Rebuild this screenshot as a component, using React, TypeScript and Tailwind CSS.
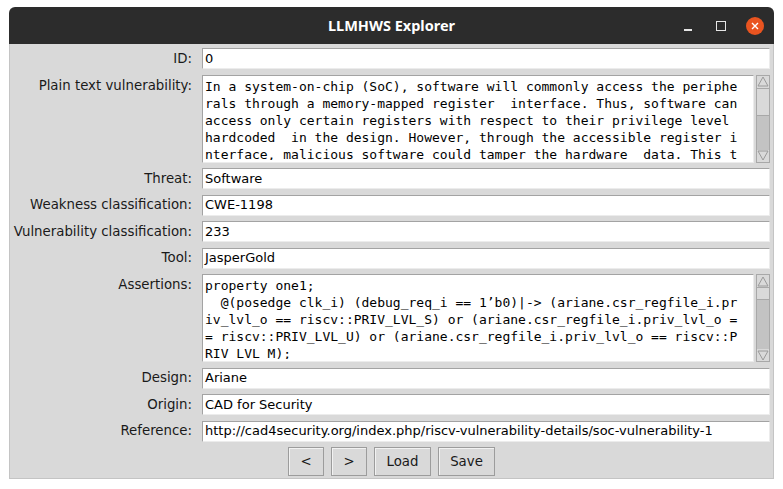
import React from 'react'

const plainLines = [
  'In a system-on-chip (SoC), software will commonly access the periphe',
  'rals through a memory-mapped register  interface. Thus, software can',
  'access only certain registers with respect to their privilege level ',
  'hardcoded  in the design. However, through the accessible register i',
  'nterface, malicious software could tamper the hardware  data. This t',
]

const assertionLines = [
  'property one1;',
  '  @(posedge clk_i) (debug_req_i == 1’b0)|-> (ariane.csr_regfile_i.pr',
  'iv_lvl_o == riscv::PRIV_LVL_S) or (ariane.csr_regfile_i.priv_lvl_o =',
  '= riscv::PRIV_LVL_U) or (ariane.csr_regfile_i.priv_lvl_o == riscv::P',
  'RIV_LVL_M);',
]

function Arrow({ up }: { up: boolean }) {
  return (
    <div className="h-[12px] bg-[#d9d9d9] flex items-center justify-center">
      <svg width="12" height="11" viewBox="0 0 12 11">
        {up ? (
          <polygon points="6,1 11,10 1,10" fill="#d9d9d9" stroke="#9a9a9a" strokeWidth="1" />
        ) : (
          <polygon points="1,1 11,1 6,10" fill="#d9d9d9" stroke="#9a9a9a" strokeWidth="1" />
        )}
      </svg>
    </div>
  )
}

function Scrollbar({ slider }: { slider: number }) {
  return (
    <div className="w-[14px] shrink-0 flex flex-col border border-[#a8a8a8] bg-[#c3c3c3]">
      <Arrow up />
      <div className="bg-[#d9d9d9] border-y border-[#a8a8a8]" style={{ height: slider }} />
      <div className="flex-1" />
      <Arrow up={false} />
    </div>
  )
}

function Entry({ value }: { value: string }) {
  return (
    <div className="h-[21px] bg-white border border-[#a3a3a3] border-r-[#ececec] border-b-[#ececec] px-[2px] flex items-center text-[13px] text-black whitespace-nowrap overflow-hidden">
      {value}
    </div>
  )
}

function TextBox({ lines, slider }: { lines: string[]; slider: number }) {
  return (
    <div className="h-[88px] flex gap-[2px]">
      <div className="flex-1 bg-white border border-[#a3a3a3] border-r-[#ececec] border-b-[#ececec] pl-[2px] pt-[2px] overflow-hidden">
        <div className="h-[82px] overflow-hidden font-['DejaVu_Sans_Mono',monospace] text-[13px] leading-[17px] text-black">
          {lines.map((l, i) => (
            <div key={i} className="whitespace-pre">{l}</div>
          ))}
        </div>
      </div>
      <Scrollbar slider={slider} />
    </div>
  )
}

function Label({ text, top }: { text: string; top?: boolean }) {
  return (
    <div className={`text-right text-[13.33px] text-[#1a1a1a] whitespace-nowrap ${top ? 'pt-[2px] leading-[17px]' : 'h-[21px] flex items-center justify-end'}`}>
      {text}
    </div>
  )
}

function Button({ text, w }: { text: string; w: string }) {
  return (
    <button className={`${w} h-[29px] bg-[#d9d9d9] border border-[#9c9c9c] shadow-[inset_1px_1px_0_#f2f2f2] text-[13.33px] text-[#1a1a1a] flex items-center justify-center`}>
      {text}
    </button>
  )
}

export default function App() {
  return (
    <div className="w-[783px] h-[489px] bg-white pt-[7px] px-[9px] font-['DejaVu_Sans',sans-serif]">
      <div className="w-[765px] flex flex-col">
        <div className="h-[37px] bg-[#2c2c2c] rounded-t-[6px] grid grid-cols-[1fr_auto_1fr] items-center">
          <div />
          <div className="text-white font-bold text-[14.5px] font-['Noto_Sans',sans-serif]">LLMHWS Explorer</div>
          <div className="flex items-center justify-end pr-[10px] gap-[20px]">
            <div className="w-[8px] h-[1.5px] bg-[#e6e6e6] mt-[9px]" />
            <div className="w-[10px] h-[10px] border border-[#e6e6e6] ml-[4px]" />
            <div className="w-[18px] h-[18px] rounded-full bg-[#e95420] flex items-center justify-center">
              <svg width="8" height="8" viewBox="0 0 8 8">
                <path d="M1 1 L7 7 M7 1 L1 7" stroke="white" strokeWidth="1.4" />
              </svg>
            </div>
          </div>
        </div>
        <div className="h-[435px] bg-[#d9d9d9] border-x border-b border-[#c4c4c4] pt-[4px] pr-[3px]">
          <div className="grid grid-cols-[182px_1fr] gap-x-[10px] gap-y-[5.5px]">
            <Label text="ID:" />
            <Entry value="0" />
            <Label text="Plain text vulnerability:" top />
            <TextBox lines={plainLines} slider={28} />
            <Label text="Threat:" />
            <Entry value="Software" />
            <Label text="Weakness classification:" />
            <Entry value="CWE-1198" />
            <Label text="Vulnerability classification:" />
            <Entry value="233" />
            <Label text="Tool:" />
            <Entry value="JasperGold" />
            <Label text="Assertions:" top />
            <TextBox lines={assertionLines} slider={13} />
            <Label text="Design:" />
            <Entry value="Ariane" />
            <Label text="Origin:" />
            <Entry value="CAD for Security" />
            <Label text="Reference:" />
            <Entry value="http://cad4security.org/index.php/riscv-vulnerability-details/soc-vulnerability-1" />
            <div className="col-span-2 flex justify-center gap-[7px] pl-[3px]">
              <Button text="<" w="w-[36px]" />
              <Button text=">" w="w-[36px]" />
              <Button text="Load" w="w-[57px]" />
              <Button text="Save" w="w-[57px]" />
            </div>
          </div>
        </div>
      </div>
    </div>
  )
}
